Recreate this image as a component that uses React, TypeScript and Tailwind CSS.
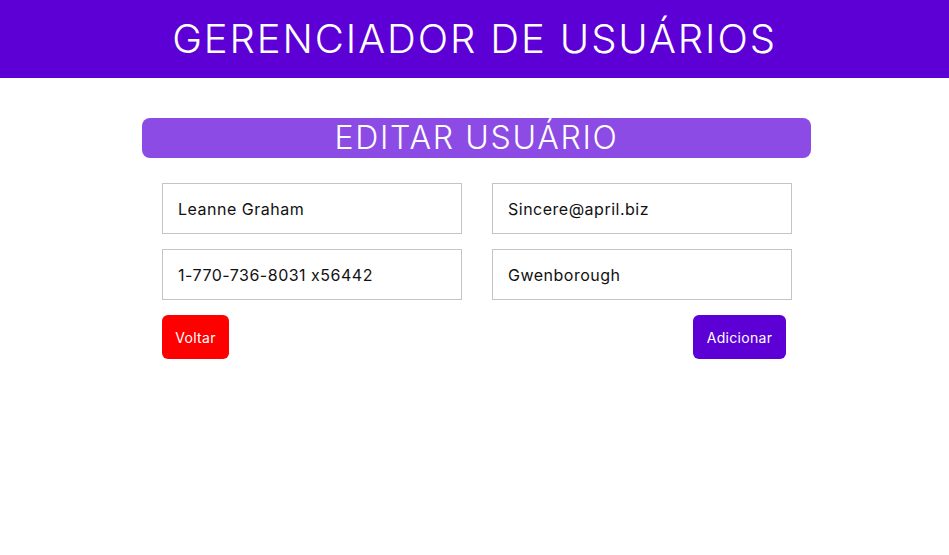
import React from "react";

export default function App() {
  const font = { fontFamily: '"Inter", "Open Sans", sans-serif', fontFeatureSettings: '"calt" 0' };
  return (
    <div className="min-h-[555px] bg-white" style={font}>
      <header className="h-[78px] bg-[#5c00d6] flex items-center justify-center">
        <h1 className="text-white text-[40px] font-light leading-none tracking-[1.9px]">GERENCIADOR DE USUÁRIOS</h1>
      </header>
      <main className="ml-[142px] w-[669px] mt-[40px]">
        <div className="h-[40px] rounded-[8px] bg-[#8c4be4] flex items-center justify-center">
          <h2 className="text-white text-[32px] font-light leading-none tracking-[1.7px]">EDITAR USUÁRIO</h2>
        </div>
        <div className="px-[20px] pt-[25px]">
          <div className="grid grid-cols-2 gap-x-[31px] gap-y-[15px]">
            {["Leanne Graham", "Sincere@april.biz", "1-770-736-8031 x56442", "Gwenborough"].map((v) => (
              <input
                key={v}
                defaultValue={v}
                className="h-[51px] w-[300px] border border-[#c4c4c4] px-[15px] text-[16px] tracking-[0.5px] text-[#111] outline-none"
                style={font}
              />
            ))}
          </div>
          <div className="flex justify-between mt-[15px] pr-[5px]">
            <button className="h-[44px] w-[67px] rounded-[6px] bg-[#ff0000] text-white text-[14px] tracking-[0.3px]" style={font}>Voltar</button>
            <button className="h-[44px] w-[93px] rounded-[6px] bg-[#5c00d6] text-white text-[14px] tracking-[0.3px]" style={font}>Adicionar</button>
          </div>
        </div>
      </main>
    </div>
  );
}
